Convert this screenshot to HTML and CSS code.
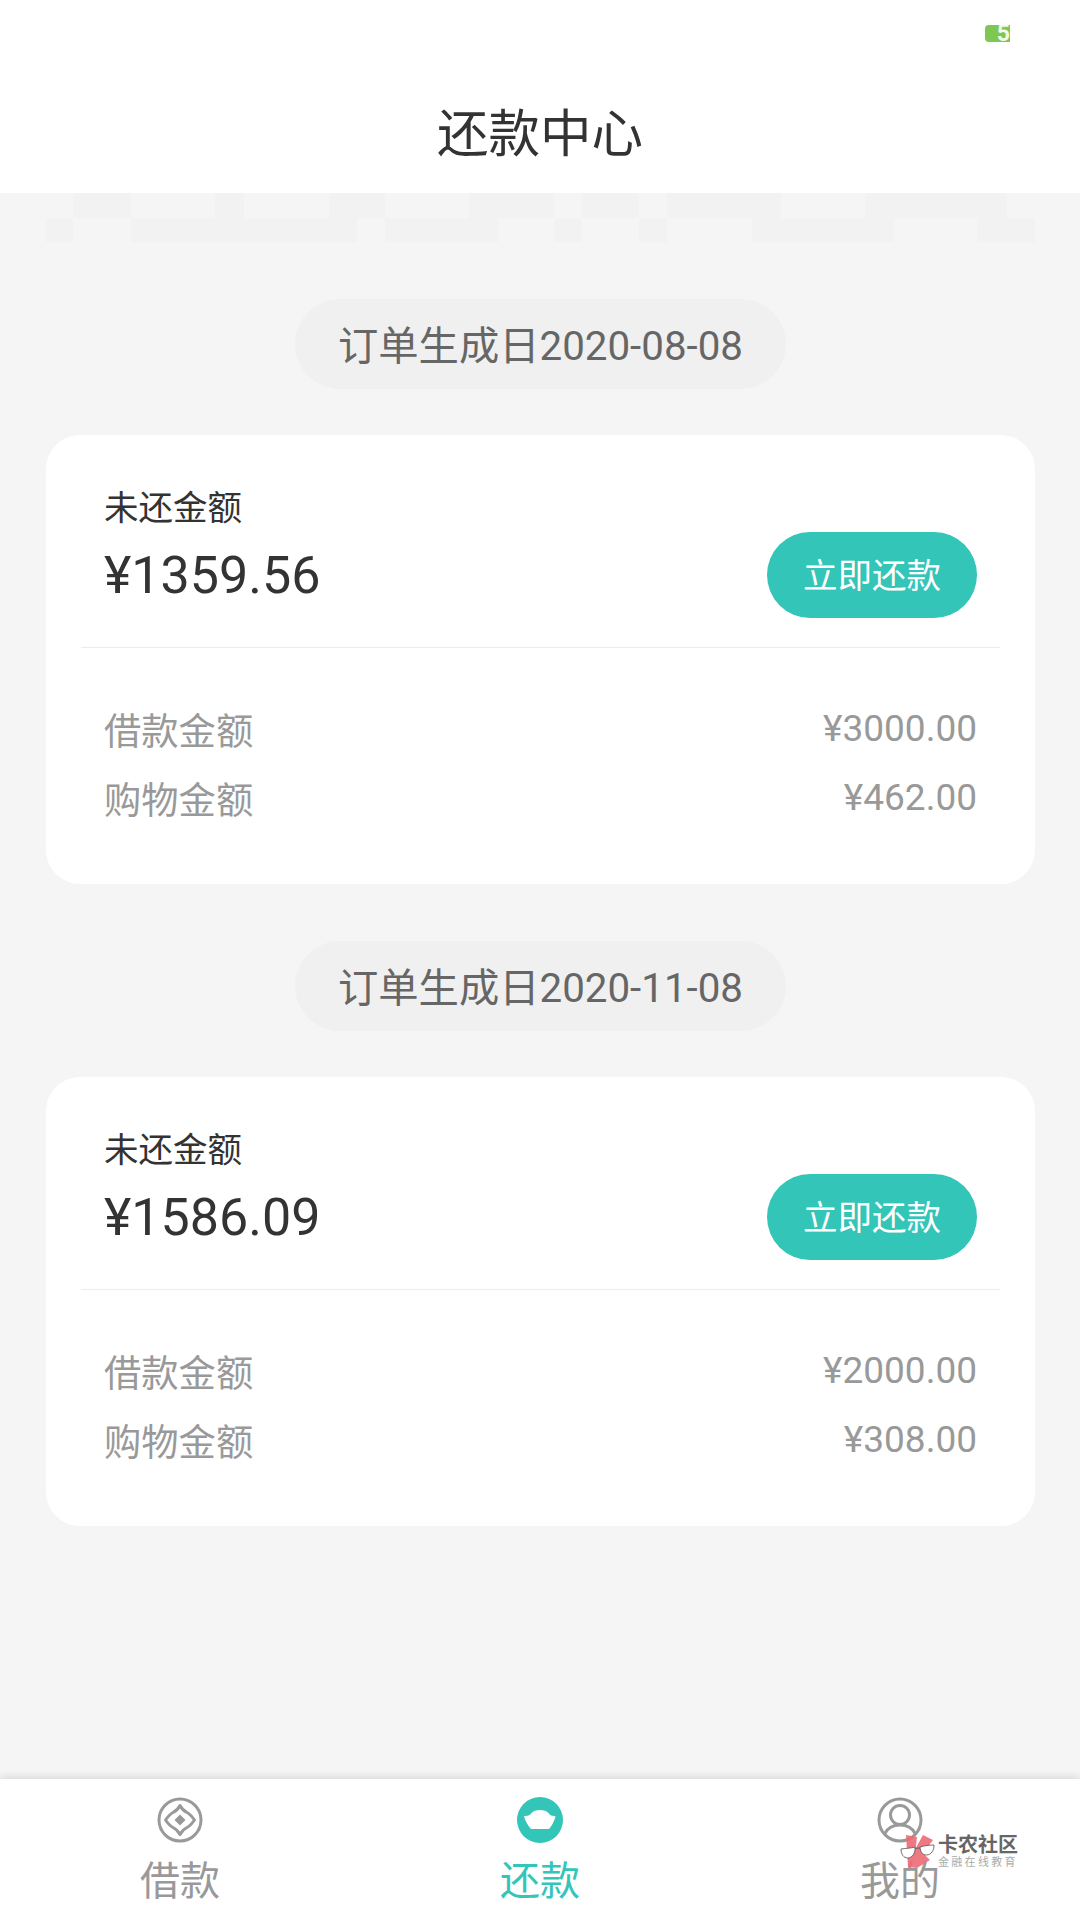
FILE: index.html
```html
<!DOCTYPE html>
<html lang="zh-CN">
<head>
<meta charset="utf-8">
<title>还款中心</title>
<link rel="stylesheet" href="styles.css">
</head>
<body>
<div class="app">
  <header class="header">
    <div class="status"><div class="battery">5</div></div>
    <h1 class="title">还款中心</h1>
  </header>
  <main class="main">
    <div class="mosaic"><div class="mosaic-row mosaic-a"></div><div class="mosaic-row mosaic-b"></div></div>
    <div class="orders">
      <section class="order">
        <div class="pill">订单生成日2020-08-08</div>
        <div class="card">
          <div class="summary">
            <div class="due">
              <div class="due-label">未还金额</div>
              <div class="due-amount">¥1359.56</div>
            </div>
            <div class="pay">立即还款</div>
          </div>
          <div class="divider"></div>
          <div class="details">
            <div class="row"><span class="row-label">借款金额</span><span class="row-value">¥3000.00</span></div>
            <div class="row"><span class="row-label">购物金额</span><span class="row-value">¥462.00</span></div>
          </div>
        </div>
      </section>
      <section class="order">
        <div class="pill">订单生成日2020-11-08</div>
        <div class="card">
          <div class="summary">
            <div class="due">
              <div class="due-label">未还金额</div>
              <div class="due-amount">¥1586.09</div>
            </div>
            <div class="pay">立即还款</div>
          </div>
          <div class="divider"></div>
          <div class="details">
            <div class="row"><span class="row-label">借款金额</span><span class="row-value">¥2000.00</span></div>
            <div class="row"><span class="row-label">购物金额</span><span class="row-value">¥308.00</span></div>
          </div>
        </div>
      </section>
    </div>
  </main>
  <nav class="tabbar">
    <div class="tab">
      <svg class="tab-icon" viewBox="0 0 46 46">
        <circle cx="23" cy="23" r="21" fill="none" stroke="#999" stroke-width="3"/>
        <path d="M23 8.500 C25 12.500 27 14 30 15.500 C32 16.500 35 19.500 37.500 23 C35 26.500 32 29.500 30 30.500 C27 32 25 33.500 23 37.500 C21 33.500 19 32 16 30.500 C14 29.500 11 26.500 8.500 23 C11 19.500 14 16.500 16 15.500 C19 14 21 12.500 23 8.500 Z" fill="none" stroke="#999" stroke-width="3" stroke-linejoin="round"/>
        <path d="M23 17.500 L28.500 23 L23 28.500 L17.500 23 Z" fill="#999"/>
      </svg>
      <div class="tab-label">借款</div>
    </div>
    <div class="tab tab-active">
      <svg class="tab-icon" viewBox="0 0 46 46">
        <circle cx="23" cy="23" r="23" fill="#33c5b8"/>
        <path d="M7 19 C11 19.500 13 18 14.500 16 C16 14 19.500 13 23 13 C26.500 13 30 14 31.500 16 C33 18 35 19.500 38.500 19 C37.500 24 35 28.500 32 32 L14 32 C11 28.500 8 24 7 19 Z" fill="#fff"/>
      </svg>
      <div class="tab-label">还款</div>
    </div>
    <div class="tab">
      <svg class="tab-icon" viewBox="0 0 46 46">
        <circle cx="23" cy="23" r="21" fill="none" stroke="#999" stroke-width="3"/>
        <circle cx="23" cy="18" r="9.500" fill="none" stroke="#999" stroke-width="3"/>
        <path d="M7.500 37 C10.500 31 16 28 23 28 C30 28 35.500 31 38.500 37" fill="none" stroke="#999" stroke-width="3"/>
      </svg>
      <div class="tab-label">我的</div>
    </div>
  </nav>
  <div class="watermark">
    <svg class="wm-logo" viewBox="0 0 120 135">
      <path d="M33 30 L66 36 L62 70 L84 30 L114 45 L84 85 L105 105 L66 129 L39 126 Z" fill="#ec6a74" fill-opacity="0.9"/>
      <path d="M18 72 C30 70 46 70 60 66 C62 84 52 99 38 99 C26 99 18 88 18 72 Z" fill="#fff" stroke="#555" stroke-width="2.500"/>
      <path d="M75 66 C88 62 104 60 117 60 C118 76 108 90 94 90 C82 90 76 80 75 66 Z" fill="#fff" stroke="#555" stroke-width="2.500"/>
      <path d="M60 70 L75 69" fill="none" stroke="#555" stroke-width="2.500"/>
    </svg>
    <div class="wm-text">
      <div class="wm-name">卡农社区</div>
      <div class="wm-sub">金融在线教育</div>
    </div>
  </div>
</div>
</body>
</html>
```
FILE: styles.css
```css
* { box-sizing: border-box; }
html, body { margin: 0; padding: 0; background: #f5f5f5; }
body { font-family: Roboto, "Noto Sans CJK SC", sans-serif; color: #333; }

.app { position: relative; width: 1080px; height: 1920px; display: flex; flex-direction: column; overflow: hidden; background: #f5f5f5; }

.header { height: 193px; background: #fff; flex: none; }
.status { display: flex; justify-content: flex-end; padding: 25px 70px 0 0; height: 42px; }
.battery { width: 25px; height: 17px; background: #7cc850; border-radius: 4px 0 0 4px; color: #f2fbe9; font: 700 23px/17px Roboto, sans-serif; text-align: right; overflow: hidden; }
.title { margin: 0; padding-top: 61px; text-align: center; font-size: 51.500px; line-height: 64px; font-weight: 400; color: #333; }

.main { flex: 1; }
.mosaic-row { height: 24.500px; }
.mosaic-a { background: linear-gradient(to right,
  #f5f5f5 73px, #f2f2f2 73px 131px, #f5f5f5 131px 215px, #f2f2f2 215px 244px, #f5f5f5 244px 329px,
  #f2f2f2 329px 385px, #f5f5f5 385px 469px, #f2f2f2 469px 554px, #f5f5f5 554px 582px, #f2f2f2 582px 639px,
  #f5f5f5 639px 667px, #f2f2f2 667px 781px, #f5f5f5 781px 865px, #f2f2f2 865px 1007px, #f5f5f5 1007px); }
.mosaic-b { background: linear-gradient(to right,
  #f5f5f5 46px, #f2f2f2 46px 73px, #f5f5f5 73px 131px, #f2f2f2 131px 357px, #f5f5f5 357px 385px,
  #f2f2f2 385px 498px, #f5f5f5 498px 554px, #f2f2f2 554px 582px, #f5f5f5 582px 639px, #f2f2f2 639px 667px,
  #f5f5f5 667px 752px, #f2f2f2 752px 894px, #f5f5f5 894px 977px, #f2f2f2 977px 1035px, #f5f5f5 1035px); }

.orders { padding: 57px 45px 0 46px; display: flex; flex-direction: column; gap: 57px; }
.order { display: flex; flex-direction: column; align-items: center; gap: 46px; }
.pill { width: 491px; height: 90px; border-radius: 45px; background: #f0f0f0; color: #666; font-size: 40.300px; line-height: 95px; text-align: center; }

.card { width: 100%; height: 449px; background: #fff; border-radius: 34px; padding: 48px 35px 0; }
.summary { display: flex; justify-content: space-between; align-items: flex-start; height: 164px; padding: 0 23px; }
.due-label { font-size: 34.500px; line-height: 50px; color: #333; }
.due-amount { margin-top: 8px; font-size: 52px; line-height: 70px; color: #333; }
.pay { width: 210px; height: 86px; margin-top: 49px; border-radius: 43px; background: #33c5b8; color: #fff; font-size: 34.500px; line-height: 88px; text-align: center; }
.divider { height: 1px; background: #ececec; }
.details { padding: 59px 23px 0; display: flex; flex-direction: column; gap: 19px; }
.row { display: flex; justify-content: space-between; height: 50px; line-height: 50px; color: #999; }
.row-label { font-size: 37.300px; }
.row-value { font-size: 37px; margin-top: -3px; }

.tabbar { flex: none; height: 141px; display: grid; grid-template-columns: repeat(3, 1fr); background: #fff; box-shadow: 0 -2px 8px rgba(0, 0, 0, 0.12); }
.tab { display: flex; flex-direction: column; align-items: center; padding-top: 18px; color: #999; }
.tab-icon { width: 46px; height: 46px; display: block; }
.tab-label { margin-top: 14px; height: 42px; overflow: hidden; font-size: 40px; line-height: 50px; }
.tab-active { color: #33c5b8; }

.watermark { position: absolute; left: 895px; top: 1825px; display: flex; gap: 3px; align-items: flex-start; }
.wm-logo { width: 40px; height: 45px; display: block; }
.wm-text { padding-top: 9px; }
.wm-name { font-size: 20px; line-height: 22px; font-weight: 700; color: #666; white-space: nowrap; }
.wm-sub { font-size: 11px; line-height: 14px; letter-spacing: 2.300px; color: #aaa; white-space: nowrap; }
```
